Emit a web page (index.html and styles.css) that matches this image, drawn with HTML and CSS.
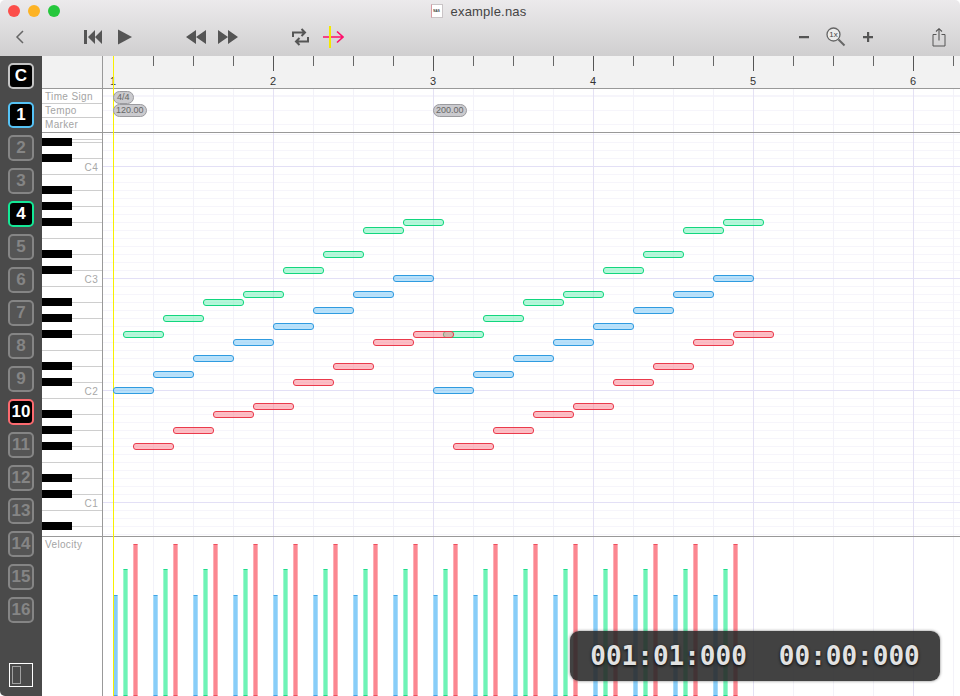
FILE: index.html
```html
<!DOCTYPE html>
<html>
<head>
  <title>example.nas</title>
  <link rel="stylesheet" href="styles.css">
</head>
<body>
  <div class="window">
    <header class="titlebar">
      <div class="title-row">
        <div class="lights">
          <span class="light red"></span>
          <span class="light yellow"></span>
          <span class="light green"></span>
        </div>
        <div class="doc-title">
          <span class="doc-icon">NAS</span>
          <span class="doc-name">example.nas</span>
        </div>
      </div>
      <div class="toolbar">
        <svg class="tool tool-back" width="10" height="14" viewBox="0 0 10 14"><path d="M8 1 L2 7 L8 13" fill="none" stroke="#666" stroke-width="1.5"/></svg>
        <svg class="tool tool-first" width="18" height="16" viewBox="0 0 18 16"><path d="M0 1h3v14H0z M4 8 L11 1V15z M11 8 L18 1V15z" fill="#555"/></svg>
        <svg class="tool tool-play" width="14" height="16" viewBox="0 0 14 16"><path d="M0 0.5 L14 8 L0 15.5z" fill="#555"/></svg>
        <svg class="tool tool-rew" width="20" height="16" viewBox="0 0 20 16"><path d="M0 8 L10 1V15z M10 8 L20 1V15z" fill="#555"/></svg>
        <svg class="tool tool-fwd" width="20" height="16" viewBox="0 0 20 16"><path d="M0 1 L10 8 L0 15z M10 1 L20 8 L10 15z" fill="#555"/></svg>
        <svg class="tool tool-loop" width="17" height="18" viewBox="0 0 17 18"><path d="M1 9V4.500h11 M9.500 1 L13 4.500 L9.500 8 M16 9v4.500H5 M7.500 10 L4 13.500 L7.500 17" fill="none" stroke="#555" stroke-width="2"/></svg>
        <svg class="tool tool-cursor" width="21" height="22" viewBox="0 0 21 22"><path d="M0 11H20 M14 5.500 L20 11 L14 16.500" fill="none" stroke="#ff0f6c" stroke-width="1.600"/><path d="M7 0V22" stroke="#f4e800" stroke-width="2"/></svg>
        <span class="tool-gap"></span>
        <svg class="tool tool-minus" width="10" height="3" viewBox="0 0 10 3"><path d="M0 0h10v2.200H0z" fill="#555"/></svg>
        <span class="tool tool-zoom">
          <svg width="20" height="20" viewBox="0 0 20 20"><circle cx="7.500" cy="7.500" r="6.500" fill="#ececec" stroke="#666" stroke-width="1.300"/><path d="M12.500 12.500 L18.500 18.500" stroke="#666" stroke-width="2"/></svg>
          <span class="zoom-label">1x</span>
        </span>
        <svg class="tool tool-plus" width="10" height="10" viewBox="0 0 10 10"><path d="M4 0h2.200v4H10v2.200H6.200V10H4V6.200H0V4h4z" fill="#555"/></svg>
        <svg class="tool tool-share" width="14" height="19" viewBox="0 0 14 19"><path d="M4.500 6.500H1V18H13V6.500H9.500" fill="none" stroke="#555"/><path d="M7 12.500V1 M4 3.500 L7 .7 L10 3.500" fill="none" stroke="#555" stroke-width="1.100"/></svg>
      </div>
    </header>

    <div class="main">
      <aside class="tracks" id="tracks">
        <div class="track-list" id="trackList"></div>
        <div class="layout-toggle"><span class="layout-pane"></span></div>
      </aside>

      <section class="editor">
        <div class="band ruler-band">
          <div class="side"></div>
          <div class="lane ruler" id="ruler"></div>
        </div>
        <div class="band meta-band">
          <div class="side meta-labels">
            <div class="meta-label">Time Sign</div>
            <div class="meta-label">Tempo</div>
            <div class="meta-label">Marker</div>
          </div>
          <div class="lane grid meta-lane">
            <span class="pill pill-sign">4/4</span>
            <span class="pill pill-tempo">120.00</span>
            <span class="pill pill-tempo pill-tempo2">200.00</span>
          </div>
        </div>
        <div class="band roll-band">
          <div class="side piano" id="piano"></div>
          <div class="lane grid roll" id="roll"></div>
        </div>
        <div class="band velocity-band">
          <div class="side velocity-side">Velocity</div>
          <div class="lane velocity" id="velocity"></div>
        </div>
        <div class="playhead"></div>
      </section>
    </div>

    <div class="timer">
      <span>001:01:000</span>
      <span>00:00:000</span>
    </div>
  </div>
  <script src="roll.js"></script>
</body>
</html>
```

FILE: styles.css
```css
* {
  box-sizing: border-box;
}

html, body {
  margin: 0;
  height: 100%;
  background: #fff;
}

body {
  font-family: "Liberation Sans", Arial, sans-serif;
  overflow: hidden;
}

.window {
  position: relative;
  width: 960px;
  height: 696px;
  display: flex;
  flex-direction: column;
  overflow: hidden;
  border-radius: 5px 5px 0 5px;
}

/* title bar and toolbar */
.titlebar {
  height: 56px;
  flex: none;
  background: linear-gradient(#eceaec, #d0cfd0);
}

.title-row {
  position: relative;
  height: 22px;
  display: flex;
  align-items: center;
  justify-content: center;
}

.lights {
  position: absolute;
  left: 8px;
  top: 5px;
  display: flex;
  gap: 8px;
}

.light {
  width: 12px;
  height: 12px;
  border-radius: 50%;
}

.light.red { background: #fc4e4a; }
.light.yellow { background: #fdb324; }
.light.green { background: #25c73c; }

.doc-title {
  display: flex;
  align-items: center;
  gap: 8px;
  margin-right: 3px;
  font-size: 13px;
  color: #444;
}

.doc-name {
  letter-spacing: .2px;
}

.doc-icon {
  width: 12px;
  height: 14px;
  background: #fff;
  border: 1px solid #c9c4c6;
  border-left-color: #d89aa2;
  font-size: 3px;
  font-weight: bold;
  line-height: 12px;
  text-align: center;
  color: #333;
}

.toolbar {
  height: 34px;
  display: flex;
  align-items: center;
  padding-bottom: 4px;
}

.tool {
  display: block;
  flex: none;
}

.tool-back { margin-left: 15px; }
.tool-first { margin-left: 59px; }
.tool-play { margin-left: 16px; }
.tool-rew { margin-left: 54px; }
.tool-fwd { margin-left: 12px; }
.tool-loop { margin-left: 54px; }
.tool-cursor { margin-left: 14px; }
.tool-gap { flex: 1; }
.tool-minus { margin-top: 1px; }

.tool-zoom {
  position: relative;
  width: 20px;
  height: 20px;
  margin-left: 17px;
}

.zoom-label {
  position: absolute;
  left: 1px;
  top: 3px;
  width: 13px;
  font-size: 8px;
  line-height: 9px;
  text-align: center;
  color: #444;
}

.tool-plus { margin-left: 17px; }
.tool-share { margin-left: 59px; margin-right: 14px; }

/* main area */
.main {
  flex: 1;
  display: flex;
  min-height: 0;
}

.tracks {
  width: 42px;
  flex: none;
  display: flex;
  flex-direction: column;
  align-items: center;
  padding-top: 7px;
  background: #4a4a4a;
}

.track-list {
  flex: 1;
  display: flex;
  flex-direction: column;
  gap: 7px;
}

.track {
  width: 26px;
  height: 26px;
  display: flex;
  align-items: center;
  justify-content: center;
  border: 2px solid #858585;
  border-radius: 5px;
  font-size: 17px;
  font-weight: bold;
  color: #858585;
  background: #555;
}

.track.on {
  background: #000;
  color: #fff;
}

.track.master { border-color: #c4c4c4; margin-bottom: 6px; }
.track.ch1 { border-color: #55c2f5; }
.track.ch4 { border-color: #14e896; }
.track.ch10 { border-color: #fb6a6f; }

.layout-toggle {
  width: 24px;
  height: 24px;
  margin-bottom: 9px;
  padding: 2px;
  border: 1px solid #fff;
}

.layout-pane {
  display: block;
  width: 9px;
  height: 18px;
  border: 1px solid #a0a0a0;
}

.editor {
  position: relative;
  flex: 1;
  display: flex;
  flex-direction: column;
  min-width: 0;
}

.band {
  display: flex;
  flex: none;
  border-bottom: 1px solid #999;
}

.side {
  position: relative;
  width: 61px;
  flex: none;
  border-right: 1px solid #999;
}

.lane {
  position: relative;
  flex: 1;
  overflow: hidden;
}

/* lane x=0 is 103 on the page, first bar line sits at 10px */
.grid {
  background-color: #fff;
  background-image:
    repeating-linear-gradient(90deg, #e4e1f4 0 1px, transparent 1px 160px),
    repeating-linear-gradient(90deg, #f3f2f9 0 1px, transparent 1px 40px),
    repeating-linear-gradient(180deg, #f6f5fb 0 1px, transparent 1px 8px);
  background-position: 10px 0, 10px 0, 0 0;
}

/* ruler */
.ruler-band {
  height: 33px;
  background: #f2f2f2;
}

.ruler {
  background-image:
    repeating-linear-gradient(90deg, #555 0 1px, transparent 1px 160px),
    repeating-linear-gradient(90deg, #666 0 1px, transparent 1px 40px);
  background-position: 10px 0, 10px 0;
  background-size: 100% 15px, 100% 10px;
  background-repeat: no-repeat;
}

.bar-num {
  position: absolute;
  top: 18px;
  width: 20px;
  margin-left: -10px;
  font-size: 11px;
  line-height: 14px;
  text-align: center;
  color: #333;
}

/* time sign, tempo, marker */
.meta-band {
  height: 44px;
}

.meta-label {
  height: 14.500px;
  padding-left: 3px;
  border-bottom: 1px solid #ccc;
  font-size: 10px;
  line-height: 14px;
  letter-spacing: .35px;
  color: #a4a4a4;
}

.meta-label:first-child {
  line-height: 15px;
}

.meta-label:last-child {
  border-bottom: none;
}

.meta-lane {
  background-image:
    repeating-linear-gradient(90deg, #e4e1f4 0 1px, transparent 1px 160px),
    repeating-linear-gradient(90deg, #f3f2f9 0 1px, transparent 1px 40px),
    repeating-linear-gradient(180deg, #f6f5fb 0 1px, transparent 1px 14px);
  background-position: 10px 0, 10px 0, 0 7px;
}

.pill {
  position: absolute;
  z-index: 1;
  left: 10px;
  height: 13px;
  padding: 0 2px;
  border: 1px solid #9b9b9f;
  border-radius: 7px;
  background: #cacace;
  font-size: 9px;
  line-height: 11px;
  color: #666;
}

.pill-sign { top: 2px; padding: 0 3px; }
.pill-tempo { top: 15px; }
.pill-tempo2 { left: 330px; }

/* piano roll */
.roll-band {
  height: 404px;
}

.roll {
  background-position: 10px 0, 10px 0, 0 1px;
}

.piano {
  overflow: hidden;
  background-image: repeating-linear-gradient(180deg, #cecece 0 1px, transparent 1px 16px);
  background-position: 0 9px;
}

.black-key {
  position: absolute;
  left: 0;
  width: 30px;
  height: 8px;
  background: #000;
}

.octave-label {
  position: absolute;
  right: 4px;
  font-size: 10px;
  line-height: 12px;
  letter-spacing: .3px;
  color: #a8a8a8;
}

.octave-line {
  position: absolute;
  left: 0;
  right: 0;
  height: 1px;
  background: #e3e0f6;
}

.note {
  position: absolute;
  z-index: 1;
  width: 41px;
  height: 7px;
  border: 1px solid;
  border-radius: 3px;
}

.note.ch1 { border-color: #2f9be0; background: rgba(125, 200, 245, .55); }
.note.ch4 { border-color: #12d67f; background: rgba(90, 240, 170, .45); }
.note.ch10 { border-color: #ea3a4c; background: rgba(250, 110, 125, .45); }

/* velocity */
.velocity-band {
  flex: 1;
  border-bottom: none;
}

.velocity-side {
  padding: 2px 0 0 3px;
  font-size: 10px;
  line-height: 12px;
  letter-spacing: .35px;
  color: #a4a4a4;
}

.velocity {
  background-image:
    repeating-linear-gradient(90deg, #e4e1f4 0 1px, transparent 1px 160px),
    repeating-linear-gradient(90deg, #f3f2f9 0 1px, transparent 1px 40px);
  background-position: 10px 0, 10px 0;
}

.vel {
  position: absolute;
  bottom: 0;
  width: 5px;
  border: 1px solid;
  border-radius: 1px;
}

.vel.ch1 { background: #88cdf8; border-color: #a9dcfa; border-top-color: #3fa6e6; border-bottom-color: #3fa6e6; }
.vel.ch4 { background: #6ff3b6; border-color: #9ff7cf; border-top-color: #1fdc8c; border-bottom-color: #1fdc8c; }
.vel.ch10 { background: #fb8791; border-color: #fdb0b6; border-top-color: #ef4f5f; border-bottom-color: #ef4f5f; }

.playhead {
  position: absolute;
  left: 71px;
  top: 0;
  bottom: 0;
  width: 1px;
  background: #f8f000;
}

/* time display */
.timer {
  position: absolute;
  z-index: 2;
  left: 570px;
  top: 631px;
  width: 370px;
  height: 50px;
  display: flex;
  align-items: center;
  justify-content: center;
  gap: 32px;
  border-radius: 9px;
  background: rgba(40, 40, 40, .88);
  box-shadow: 0 0 3px rgba(40, 40, 40, .6);
  font-family: "DejaVu Sans Mono", "Liberation Mono", monospace;
  font-size: 26px;
  font-weight: bold;
  color: #e2e2e2;
  text-shadow: 0 1px 3px #000;
}
```

FILE: roll.js
```js
var BAR_LEFT = 10;  // first bar line inside a lane
var ROLL_TOP = 133; // page y of the piano roll

var COLORS = { 1: 'ch1', 4: 'ch4', 10: 'ch10' };

// one phrase per track, repeated once two bars later
var PHRASES = [
  { ch: 1, offset: 0, top: 595, rows: [390, 374, 358, 342, 326, 310, 294, 278] },
  { ch: 4, offset: 10, top: 569, rows: [334, 318, 302, 294, 270, 254, 230, 222] },
  { ch: 10, offset: 20, top: 544, rows: [446, 430, 414, 406, 382, 366, 342, 334] }
];

function add(parent, className, text) {
  var el = document.createElement('div');
  el.className = className;
  if (text) el.textContent = text;
  parent.appendChild(el);
  return el;
}

function buildTracks() {
  var list = document.getElementById('trackList');
  add(list, 'track master on', 'C');
  for (var i = 1; i <= 16; i++) {
    var el = add(list, 'track', String(i));
    if (COLORS[i]) el.className = 'track on ' + COLORS[i];
  }
}

function buildRuler() {
  var ruler = document.getElementById('ruler');
  for (var i = 0; i < 6; i++) {
    var num = add(ruler, 'bar-num', String(i + 1));
    num.style.left = (BAR_LEFT + i * 160) + 'px';
  }
}

function buildPiano() {
  var piano = document.getElementById('piano');
  var roll = document.getElementById('roll');
  var keys = [142, 158, 190, 206, 222];
  for (var oct = 0; oct < 4; oct++) {
    keys.forEach(function (y) {
      var pageY = y + oct * 112;
      if (pageY > 530) return;
      add(piano, 'black-key').style.top = (pageY - 4 - ROLL_TOP) + 'px';
    });
    var c = 166 + oct * 112;
    add(piano, 'octave-label', 'C' + (4 - oct)).style.top = (c - 4 - ROLL_TOP) + 'px';
    add(roll, 'octave-line').style.top = (c - ROLL_TOP) + 'px';
  }
}

function buildNotes() {
  var roll = document.getElementById('roll');
  var velocity = document.getElementById('velocity');
  PHRASES.forEach(function (p) {
    for (var rep = 0; rep < 2; rep++) {
      p.rows.forEach(function (y, i) {
        var x = BAR_LEFT + rep * 320 + i * 40 + p.offset;
        var note = add(roll, 'note ' + COLORS[p.ch]);
        note.style.left = x + 'px';
        note.style.top = (y - 3 - ROLL_TOP) + 'px';
        var bar = add(velocity, 'vel ' + COLORS[p.ch]);
        bar.style.left = x + 'px';
        bar.style.height = (696 - p.top) + 'px';
      });
    }
  });
}

buildTracks();
buildRuler();
buildPiano();
buildNotes();
```
